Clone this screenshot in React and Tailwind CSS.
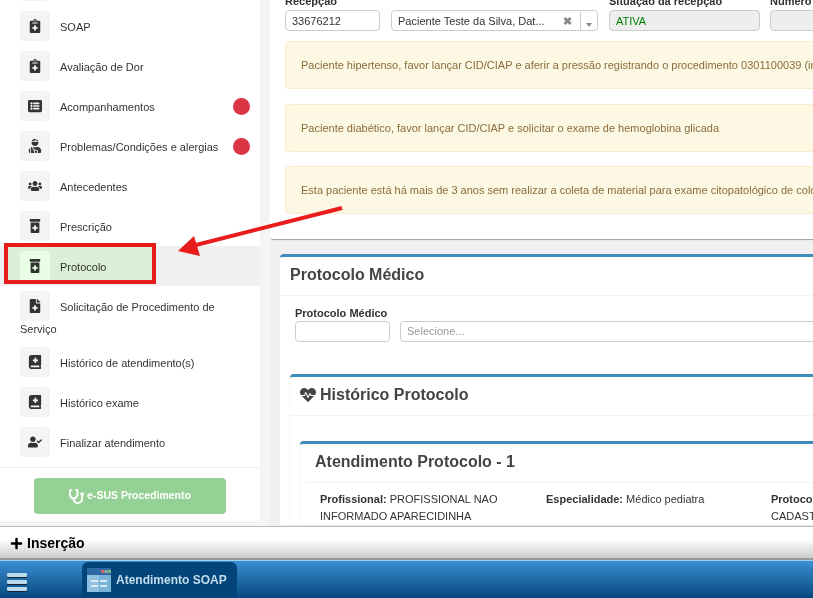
import React from 'react';
import { FaNotesMedical, FaListAlt, FaUserInjured, FaUsers, FaPrescriptionBottleAlt, FaFileMedical, FaBookMedical, FaUserCheck, FaStethoscope, FaHeartbeat, FaPlus } from 'react-icons/fa';

const menu = [
  { icon: FaNotesMedical, label: '' },
  { icon: FaNotesMedical, label: 'SOAP' },
  { icon: FaNotesMedical, label: 'Avaliação de Dor' },
  { icon: FaListAlt, label: 'Acompanhamentos', dot: true },
  { icon: FaUserInjured, label: 'Problemas/Condições e alergias', dot: true },
  { icon: FaUsers, label: 'Antecedentes' },
  { icon: FaPrescriptionBottleAlt, label: 'Prescrição' },
  { icon: FaPrescriptionBottleAlt, label: 'Protocolo', active: true },
  { icon: FaFileMedical, label: 'Solicitação de Procedimento de Serviço' },
  { icon: FaBookMedical, label: 'Histórico de atendimento(s)' },
  { icon: FaBookMedical, label: 'Histórico exame' },
  { icon: FaUserCheck, label: 'Finalizar atendimento' },
];

const alerts = [
  'Paciente hipertenso, favor lançar CID/CIAP e aferir a pressão registrando o procedimento 0301100039 (incluir na consulta)',
  'Paciente diabético, favor lançar CID/CIAP e solicitar o exame de hemoglobina glicada',
  'Esta paciente está há mais de 3 anos sem realizar a coleta de material para exame citopatológico de colo de útero',
];

const MenuItem = ({ item }) => {
  const Icon = item.icon;
  return (
    <div className={`relative px-5 py-[5px] text-[11px] leading-[16px] text-[#333] ${item.active ? 'bg-[#f0f0f0]' : ''}`}>
      <span className={`inline-flex w-[30px] h-[30px] mr-2.5 items-center justify-center align-[-2px] rounded text-[14px] text-[#333] ${item.active ? 'bg-white' : 'bg-[#f4f4f4]'}`}>
        <Icon />
      </span>
      <span>{item.label}</span>
      {item.dot && <span className="absolute right-[10px] top-[12px] w-[17px] h-[17px] rounded-full bg-[#dc3545]"></span>}
    </div>
  );
};

const Sidebar = () => (
  <aside className="w-[270px] h-[521px] shrink-0 bg-white border-r-10 border-[#f5f5f5] overflow-hidden flex flex-col">
    <div className="-mt-[34px]">
      {menu.map((item, idx) => <MenuItem key={idx} item={item} />)}
    </div>
    <div className="mt-[5px] border-t border-[#eee] pt-[10px] flex justify-center">
      <button className="w-[192px] h-9 rounded bg-[#95d195] text-white text-[10.5px] font-bold flex items-center justify-center gap-[3px]">
        <FaStethoscope className="text-[15px]" /> e-SUS Procedimento
      </button>
    </div>
  </aside>
);

const TopCard = () => (
  <div className="-mt-2 bg-white rounded-bl shadow-[0_2px_1px_-1px_rgba(0,0,0,0.35)] pl-[15px] pb-[25px] w-[900px]">
    <div className="flex text-[11px] text-[#333]">
      <div className="w-[95px] mr-[11px]">
        <div className="h-[18px] font-bold leading-[18px]">Recepção</div>
        <div className="h-[21px] border border-[#ccc] rounded px-[6px] leading-[20px]">33676212</div>
      </div>
      <div className="w-[207px] mr-[11px]">
        <div className="h-[18px]"></div>
        <div className="h-[21px] border border-[#ccc] rounded flex items-center pl-[6px] pt-px">
          <span className="flex-1">Paciente Teste da Silva, Dat...</span>
          <span className="w-[17px] text-[11px] text-[#888] font-bold">✖</span>
          <span className="w-[17px] h-full border-l border-[#ccc] flex items-end justify-center pb-[3px]">
            <span className="border-x-[3px] border-x-transparent border-t-[4px] border-t-[#888]"></span>
          </span>
        </div>
      </div>
      <div className="w-[151px] mr-[10px]">
        <div className="h-[18px] font-bold leading-[18px]">Situação da recepção</div>
        <div className="h-[21px] border border-[#ccc] rounded bg-[#eee] px-[6px] leading-[20px] text-[#008000]">ATIVA</div>
      </div>
      <div className="w-[151px]">
        <div className="h-[18px] font-bold leading-[18px]">Número</div>
        <div className="h-[21px] border border-[#ccc] rounded bg-[#eee]"></div>
      </div>
    </div>
    <div className="mt-[10px] flex flex-col gap-[14.5px]">
      {alerts.map((text, idx) => (
        <div key={idx} className="h-[48px] border border-[#faebcc] bg-[#fcf8e3] rounded pl-[15px] text-[11px] leading-[46px] text-[#8a6d3b] whitespace-nowrap overflow-hidden">{text}</div>
      ))}
    </div>
  </div>
);

const ProtocolPanel = () => (
  <div className="mt-[15px] ml-2.5 w-[900px] bg-white border-t-[3px] border-[#3c8dbc] rounded-tl">
    <div className="h-[39px] border-b border-[#f4f4f4] px-2.5 pb-[2px] flex items-center text-[16px] font-bold text-[#444]">Protocolo Médico</div>
    <div className="px-[15px] pt-[10px] text-[11px] text-[#333]">
      <div className="h-[15px] leading-[15px] font-bold">Protocolo Médico</div>
      <div className="flex gap-2.5">
        <div className="w-[95px] h-[21px] border border-[#ccc] rounded"></div>
        <div className="flex-1 h-[21px] border border-[#ccc] rounded px-[6px] leading-[19px] text-[#999]">Selecione...</div>
      </div>
    </div>
    <div className="mt-8 ml-2.5 bg-white border-t-[3px] border-[#3c8dbc] rounded-tl shadow-[0_0_1px_rgba(0,0,0,0.25)]">
      <div className="h-[39px] border-b border-[#f4f4f4] px-2.5 pb-[2px] flex items-center gap-1 text-[16px] font-bold text-[#444]">
        <FaHeartbeat className="text-[16px]" /> Histórico Protocolo
      </div>
      <div className="mt-[25px] ml-2.5 bg-white border-t-[3px] border-[#3c8dbc] rounded-tl shadow-[0_0_1px_rgba(0,0,0,0.25)]">
        <div className="ml-[5px] h-[39px] border-b border-[#f4f4f4] px-2.5 pb-[2px] flex items-center text-[16px] font-bold text-[#444]">Atendimento Protocolo - 1</div>
        <div className="pl-5 pt-2 grid grid-cols-[226px_225px_225px] text-[11px] leading-[17px] text-[#333]">
          <div className="pr-5"><b>Profissional:</b> PROFISSIONAL NAO INFORMADO APARECIDINHA</div>
          <div><b>Especialidade:</b> Médico pediatra</div>
          <div><b>Protocolo:</b><br />CADASTRO</div>
        </div>
      </div>
    </div>
  </div>
);

const Taskbar = () => (
  <div className="h-[38px] shrink-0 border-t border-[#9fd0f0] bg-gradient-to-b from-[#3b8fd3] to-[#03497f] flex items-end">
    <div className="w-[82px] h-full pl-[7px] flex flex-col justify-center gap-[3px] pt-[5px]">
      <span className="w-5 h-1 rounded-[1px] bg-[#b9dcec] shadow-[0_1px_0_#123]"></span>
      <span className="w-5 h-1 rounded-[1px] bg-[#b9dcec] shadow-[0_1px_0_#123]"></span>
      <span className="w-5 h-1 rounded-[1px] bg-[#b9dcec] shadow-[0_1px_0_#123]"></span>
    </div>
    <div className="w-[155px] h-9 rounded-t-md bg-[#03457a] flex items-center pl-[5px] gap-[5px]">
      <svg width="24" height="24" viewBox="0 0 24 24">
        <rect width="24" height="7" fill="#2d6aa5" />
        <rect x="14" y="2" width="3" height="3" fill="#c66" />
        <rect x="17.5" y="2" width="3" height="3" fill="#9a9" />
        <rect x="21" y="2" width="3" height="3" fill="#7b7" />
        <rect y="7" width="12" height="17" fill="#8fc0e0" />
        <rect x="12" y="7" width="12" height="17" fill="#79b3d8" />
        <rect x="4" y="12" width="7" height="2" fill="#dcecf6" />
        <rect x="4" y="17" width="7" height="2" fill="#dcecf6" />
        <rect x="13" y="12" width="7" height="2" fill="#dcecf6" />
        <rect x="13" y="17" width="7" height="2" fill="#dcecf6" />
      </svg>
      <span className="text-[12px] font-bold text-[#c3deed]">Atendimento SOAP</span>
    </div>
  </div>
);

export default function App() {
  return (
    <div className="relative w-[813px] h-[598px] overflow-hidden bg-white font-['Liberation_Sans',Arial,sans-serif]">
      <div className="h-[526px] flex bg-[#f4f4f4] overflow-hidden">
        <Sidebar />
        <main className="flex-1 min-w-0 bg-[#f0f0f0] overflow-hidden">
          <TopCard />
          <ProtocolPanel />
        </main>
      </div>
      <div className="h-[34px] border-t border-[#bbb] border-b-2 border-b-[#999] bg-gradient-to-b from-white from-40% to-[#ccc] flex items-center gap-[4px] pl-2.5 pt-[2px] text-[14px] font-bold text-black">
        <FaPlus className="text-[13px]" /> Inserção
      </div>
      <Taskbar />

      {/* annotation over the screenshot */}
      <div className="absolute left-[4px] top-[243px] w-[152px] h-[41px] border-4 border-[#e81c1c]"></div>
      <div className="absolute left-[8px] top-[247px] w-[144px] h-[33px] bg-[#e9ffe5] mix-blend-multiply"></div>
      <svg className="absolute left-0 top-0 pointer-events-none" width="813" height="598">
        <line x1="342" y1="208" x2="192" y2="246" stroke="#e81c1c" strokeWidth="4" />
        <polygon points="178,251 194,236 200,256" fill="#e81c1c" />
      </svg>
    </div>
  );
}
